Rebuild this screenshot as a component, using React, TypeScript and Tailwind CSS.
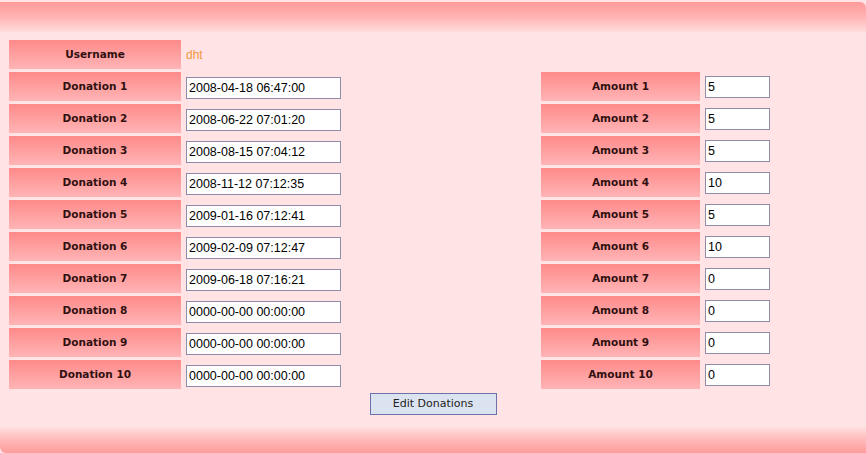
import { useState } from "react";

const donations = [
  { date: "2008-04-18 06:47:00", amount: "5" },
  { date: "2008-06-22 07:01:20", amount: "5" },
  { date: "2008-08-15 07:04:12", amount: "5" },
  { date: "2008-11-12 07:12:35", amount: "10" },
  { date: "2009-01-16 07:12:41", amount: "5" },
  { date: "2009-02-09 07:12:47", amount: "10" },
  { date: "2009-06-18 07:16:21", amount: "0" },
  { date: "0000-00-00 00:00:00", amount: "0" },
  { date: "0000-00-00 00:00:00", amount: "0" },
  { date: "0000-00-00 00:00:00", amount: "0" },
];

function Label({ children }: { children: React.ReactNode }) {
  return (
    <div className="h-[29px] flex items-center justify-center pt-[1px] bg-gradient-to-b from-[#ff8a8a] to-[#ffb4b6] font-['DejaVu_Sans',sans-serif] text-[10.5px] font-bold text-[#301010]">
      {children}
    </div>
  );
}

function Field({
  value,
  onChange,
  className,
}: {
  value: string;
  onChange: (v: string) => void;
  className: string;
}) {
  return (
    <input
      value={value}
      onChange={(e) => onChange(e.target.value)}
      className={`${className} h-[22px] border border-[#8f8ca8] bg-white px-[2px] font-['Liberation_Sans',Arial,sans-serif] text-[12.5px] text-black outline-none`}
    />
  );
}

export default function App() {
  const [rows, setRows] = useState(donations);

  const update = (i: number, key: "date" | "amount", v: string) => {
    setRows((prev) => prev.map((r, j) => (j === i ? { ...r, [key]: v } : r)));
  };

  return (
    <div className="w-[866px] h-[453px] bg-[#ffe3e5] flex flex-col overflow-hidden">
      {/* Header band */}
      <div className="h-[30px] mt-[2px] rounded-tr-[6px] bg-gradient-to-b from-[#ff9a9a] via-[#ffb4b4] to-[#ffdcdd]" />

      {/* Form */}
      <div className="flex-1 pt-[8px] px-[9px]">
        <div className="grid grid-cols-[172px_350px_159px_65px] gap-x-[5px] gap-y-[3px] items-center">
          <Label>Username</Label>
          <div className="col-span-3 font-['Liberation_Sans',Arial,sans-serif] text-[12px] text-[#f0983f]">
            dht
          </div>

          {rows.map((r, i) => (
            <div key={i} className="contents">
              <Label>Donation {i + 1}</Label>
              <div>
                <Field
                  value={r.date}
                  onChange={(v) => update(i, "date", v)}
                  className="w-[155px]"
                />
              </div>
              <Label>Amount {i + 1}</Label>
              <Field
                value={r.amount}
                onChange={(v) => update(i, "amount", v)}
                className="w-[65px]"
              />
            </div>
          ))}
        </div>

        {/* Submit */}
        <div className="flex justify-center pt-[4px]">
          <button className="w-[127px] h-[22px] border border-[#6a72a8] bg-[#dce3f0] font-['DejaVu_Sans',sans-serif] text-[11px] text-[#222]">
            Edit Donations
          </button>
        </div>
      </div>

      {/* Footer band */}
      <div className="h-[26px] rounded-bl-[6px] bg-gradient-to-b from-[#ffe0e1] via-[#ffb8b8] to-[#ff9c9c]" />
    </div>
  );
}
